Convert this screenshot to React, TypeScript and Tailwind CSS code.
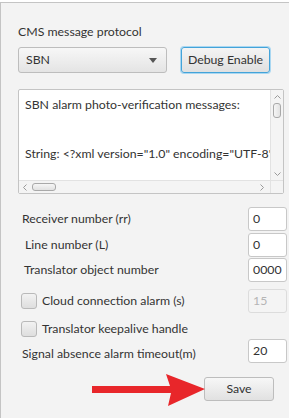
import { useState } from "react"

const font = "font-['Lato','Noto_Sans',sans-serif]"

function NumberField({ value, disabled }: { value: string; disabled?: boolean }) {
  return (
    <div
      className={`flex h-[24px] w-[39px] items-center rounded-[3px] border px-[4px] text-[12.3px] ${
        disabled
          ? "border-[#dcdcdc] bg-[#f4f4f4] text-[#b5b5b5]"
          : "border-[#c8c8c8] bg-white text-[#333]"
      }`}
    >
      {value}
    </div>
  )
}

function CheckBox({ label }: { label: string }) {
  const [checked, setChecked] = useState(false)
  return (
    <button
      type="button"
      onClick={() => setChecked(!checked)}
      className="flex items-center gap-[5px] text-[12.3px] text-[#333]"
    >
      <span className="h-[16px] w-[16px] rounded-[3px] border border-[#b9b9b9] bg-gradient-to-b from-[#f2f2f2] to-[#dedede]" />
      {label}
    </button>
  )
}

export default function App() {
  return (
    <div className={`relative h-[418px] w-[293px] overflow-hidden bg-white ${font}`}>
      <div className="mt-[2px] h-[416px] w-[289px] border-l border-t border-[#c4c4c4] bg-[#f3f3f3] pl-[17px] pr-[4px]">
        <div className="pt-[20px] text-[12.3px] text-[#333]">CMS message protocol</div>

        <div className="mt-[6px] flex items-center gap-[14px]">
          <div className="flex h-[26px] w-[149px] items-center justify-between rounded-[3px] border border-[#bdbdbd] bg-gradient-to-b from-[#f7f7f7] to-[#e4e4e4] pl-[7px] pr-[9px] text-[12.3px] text-[#333]">
            SBN
            <svg width="8" height="5" viewBox="0 0 8 5">
              <path d="M0 0h8L4 5z" fill="#555" />
            </svg>
          </div>
          <button
            type="button"
            className="h-[26px] w-[89px] rounded-[3px] border border-[#43a3d9] bg-gradient-to-b from-[#f4f4f4] to-[#e0e0e0] text-[12.3px] text-[#333] shadow-[0_0_0_1px_#a9d7f1]"
          >
            Debug Enable
          </button>
        </div>

        <div className="mt-[16px] flex h-[105px] w-[266px] flex-col rounded-[2px] border border-[#c4c4c4] bg-white">
          <div className="flex flex-1 overflow-hidden">
            <div className="flex-1 overflow-hidden whitespace-nowrap pl-[6px] pt-[6px] text-[12.3px] leading-[17px] text-[#333]">
              <div>SBN alarm photo-verification messages:</div>
              <div className="mt-[32px]">String: &lt;?xml version="1.0" encoding="UTF-8"</div>
            </div>
            <div className="relative w-[13px] border-l border-[#e2e2e2] bg-[#f4f4f4]">
              <svg className="absolute left-[3px] top-[4px]" width="7" height="5" viewBox="0 0 7 5">
                <path d="M0.5 4.5L3.5 1.5L6.5 4.5" fill="none" stroke="#9a9a9a" />
              </svg>
              <div className="absolute left-[2px] top-[13px] h-[15px] w-[8px] rounded-[3px] border border-[#a9a9a9] bg-gradient-to-r from-[#f6f6f6] to-[#e2e2e2]" />
              <svg className="absolute bottom-[3px] left-[3px]" width="7" height="5" viewBox="0 0 7 5">
                <path d="M0.5 0.5L3.5 3.5L6.5 0.5" fill="none" stroke="#9a9a9a" />
              </svg>
            </div>
          </div>
          <div className="flex h-[13px]">
            <div className="relative flex-1 border-t border-[#e2e2e2] bg-[#f4f4f4]">
              <svg className="absolute left-[3px] top-[3px]" width="5" height="7" viewBox="0 0 5 7">
                <path d="M4.5 0.5L1.5 3.5L4.5 6.5" fill="none" stroke="#9a9a9a" />
              </svg>
              <div className="absolute left-[13px] top-[2px] h-[8px] w-[24px] rounded-[3px] border border-[#a9a9a9] bg-gradient-to-b from-[#f6f6f6] to-[#e2e2e2]" />
              <svg className="absolute right-[5px] top-[3px]" width="5" height="7" viewBox="0 0 5 7">
                <path d="M0.5 0.5L3.5 3.5L0.5 6.5" fill="none" stroke="#9a9a9a" />
              </svg>
            </div>
            <div className="w-[13px] border-l border-t border-[#e2e2e2] bg-[#f4f4f4]" />
          </div>
        </div>

        <div className="mt-[13px] flex w-[269px] flex-col text-[12.3px] text-[#333]">
          <div className="flex h-[24px] items-center justify-between">
            <span className="pl-[4px]">Receiver number (rr)</span>
            <NumberField value="0" />
          </div>
          <div className="mt-[2px] flex h-[24px] items-center justify-between">
            <span className="pl-[7px]">Line number (L)</span>
            <NumberField value="0" />
          </div>
          <div className="mt-[1px] flex h-[24px] items-center justify-between">
            <span className="pl-[6px]">Translator object number</span>
            <NumberField value="0000" />
          </div>
          <div className="mt-[7px] flex h-[24px] items-center justify-between pl-[3px]">
            <CheckBox label="Cloud connection alarm (s)" />
            <NumberField value="15" disabled />
          </div>
          <div className="mt-[6px] flex h-[20px] items-center pl-[3px]">
            <CheckBox label="Translator keepalive handle" />
          </div>
          <div className="flex h-[24px] items-center justify-between">
            <span className="mt-[6px] pl-[4px]">Signal absence alarm timeout(m)</span>
            <NumberField value="20" />
          </div>
          <div className="mt-[14px] flex justify-end pr-[13px]">
            <button
              type="button"
              className="h-[24px] w-[70px] rounded-[3px] border border-[#bdbdbd] bg-gradient-to-b from-[#f7f7f7] to-[#e1e1e1] text-[12.3px] text-[#333]"
            >
              Save
            </button>
          </div>
        </div>
      </div>

      <svg className="absolute left-[92px] top-[372px]" width="114" height="36" viewBox="0 0 114 36">
        <path d="M0 14H78L74 2L113 17L76 34L79 21H0z" fill="#e8262a" />
      </svg>
    </div>
  )
}
